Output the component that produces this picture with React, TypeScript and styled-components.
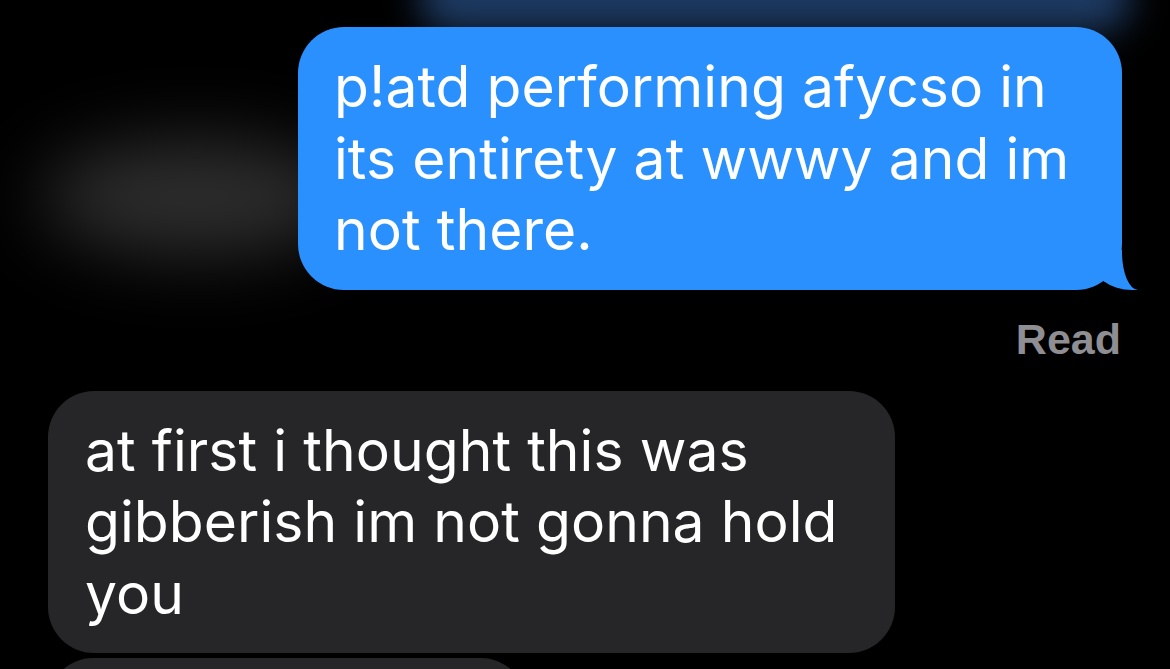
import React from 'react';
import styled, { createGlobalStyle } from 'styled-components';

const GlobalStyle = createGlobalStyle`
  html, body {
    margin: 0;
    padding: 0;
    background: #000;
    overflow: hidden;
  }
  * { box-sizing: border-box; }
`;

const Screen = styled.div`
  position: relative;
  width: 1170px;
  height: 669px;
  overflow: hidden;
  background: #000;
  font-family: Inter, 'Liberation Sans', sans-serif;
  -webkit-font-smoothing: antialiased;

  /* blurred header bubble peeking in at the top */
  &::before {
    content: '';
    position: absolute;
    left: 420px;
    top: -40px;
    width: 710px;
    height: 72px;
    border-radius: 30px;
    background: #1d3a62;
    filter: blur(18px);
  }

  /* blurred shape on the left */
  &::after {
    content: '';
    position: absolute;
    left: 40px;
    top: 140px;
    width: 310px;
    height: 115px;
    border-radius: 50%;
    background: #2e2e2e;
    filter: blur(36px);
  }
`;

const Thread = styled.div`
  position: relative;
  z-index: 1;
  display: flex;
  flex-direction: column;
  padding: 27px 48px 0;
`;

const Bubble = styled.div<{ $mine?: boolean; $width: number }>`
  position: relative;
  width: ${p => p.$width}px;
  align-self: ${p => (p.$mine ? 'flex-end' : 'flex-start')};
  padding: 24px 30px 24px ${p => (p.$mine ? 36 : 37)}px;
  border-radius: 46px;
  background: ${p => (p.$mine ? '#2a90fe' : '#262629')};
  color: #fff;
  font-size: 57px;
  line-height: 71.5px;
  letter-spacing: 0.05px;
  white-space: pre-line;
`;

const Tail = styled.div`
  &::before {
    content: '';
    position: absolute;
    right: -16px;
    bottom: 0;
    width: 46px;
    height: 40px;
    background: #2a90fe;
    border-bottom-left-radius: 40px 30px;
  }
  &::after {
    content: '';
    position: absolute;
    right: -18px;
    bottom: 0;
    width: 18px;
    height: 42px;
    background: #000;
    border-bottom-left-radius: 16px 38px;
  }
`;

const Receipt = styled.div`
  align-self: flex-end;
  margin-top: 24px;
  margin-bottom: 27px;
  padding-right: 1px;
  font-family: 'Liberation Sans', Inter, sans-serif;
  font-weight: 700;
  font-size: 43px;
  line-height: 50px;
  color: #8e8e93;
`;

const Stack = styled.div`
  display: flex;
  flex-direction: column;
  gap: 5px;
`;

const Stub = styled.div`
  width: 478px;
  height: 90px;
  border-radius: 46px;
  background: #262629;
`;

export default function App() {
  return (
    <>
      <GlobalStyle />
      <Screen>
        <Thread>
          <Bubble $mine $width={824}>
            {'p!atd performing afycso in\nits entirety at wwwy and im\nnot there.'}
            <Tail />
          </Bubble>
          <Receipt>Read</Receipt>
          <Stack>
            <Bubble $width={847}>
              {'at first i thought this was\ngibberish im not gonna hold\nyou'}
            </Bubble>
            <Stub />
          </Stack>
        </Thread>
      </Screen>
    </>
  );
}
